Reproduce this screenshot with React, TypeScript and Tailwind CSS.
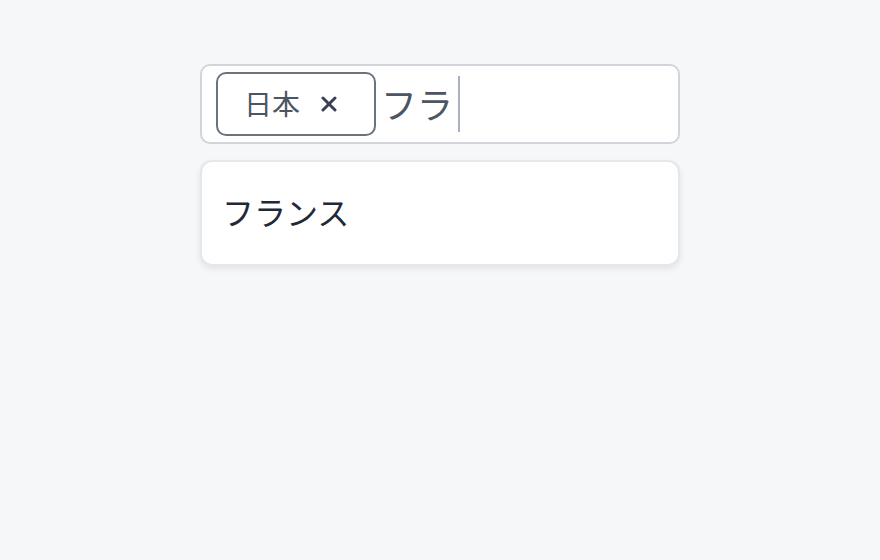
export default function App() {
  return (
    <main
      className="min-h-screen w-full bg-[#f6f7f9] flex justify-center"
      style={{ fontFamily: '"Noto Sans CJK JP", "Noto Sans", sans-serif' }}
    >
      <div className="w-[480px] mt-16 flex flex-col gap-4">
        <div className="h-20 bg-white border-2 border-[#d1d5db] rounded-[10px] px-[14px] py-[6px] flex items-center gap-[5px]">
          <span className="h-16 w-40 border-2 border-[#6b7280] rounded-[10px] flex items-center pl-[26px] gap-[21px] text-[28px] text-[#4b5563]">
            <span className="leading-none pb-[3px]">日本</span>
            <svg width="16" height="16" viewBox="0 0 16 16" className="text-[#374151]">
              <path d="M2 2L14 14M14 2L2 14" stroke="currentColor" strokeWidth="3" strokeLinecap="round" />
            </svg>
          </span>
          <span className="flex items-center text-[36px] leading-none text-[#4b5563]">
            <span className="pb-[3px]">フラ</span>
            <span className="ml-[5px] w-[2px] h-14 bg-[#a9b1bd]" />
          </span>
        </div>
        <div className="h-[106px] bg-white border-2 border-[#e5e7eb] rounded-[12px] shadow-[0_3px_6px_rgba(0,0,0,0.08)] px-[20px] flex items-center">
          <span className="text-[32px] leading-none text-[#1f2937] pb-[5px]">フランス</span>
        </div>
      </div>
    </main>
  );
}
